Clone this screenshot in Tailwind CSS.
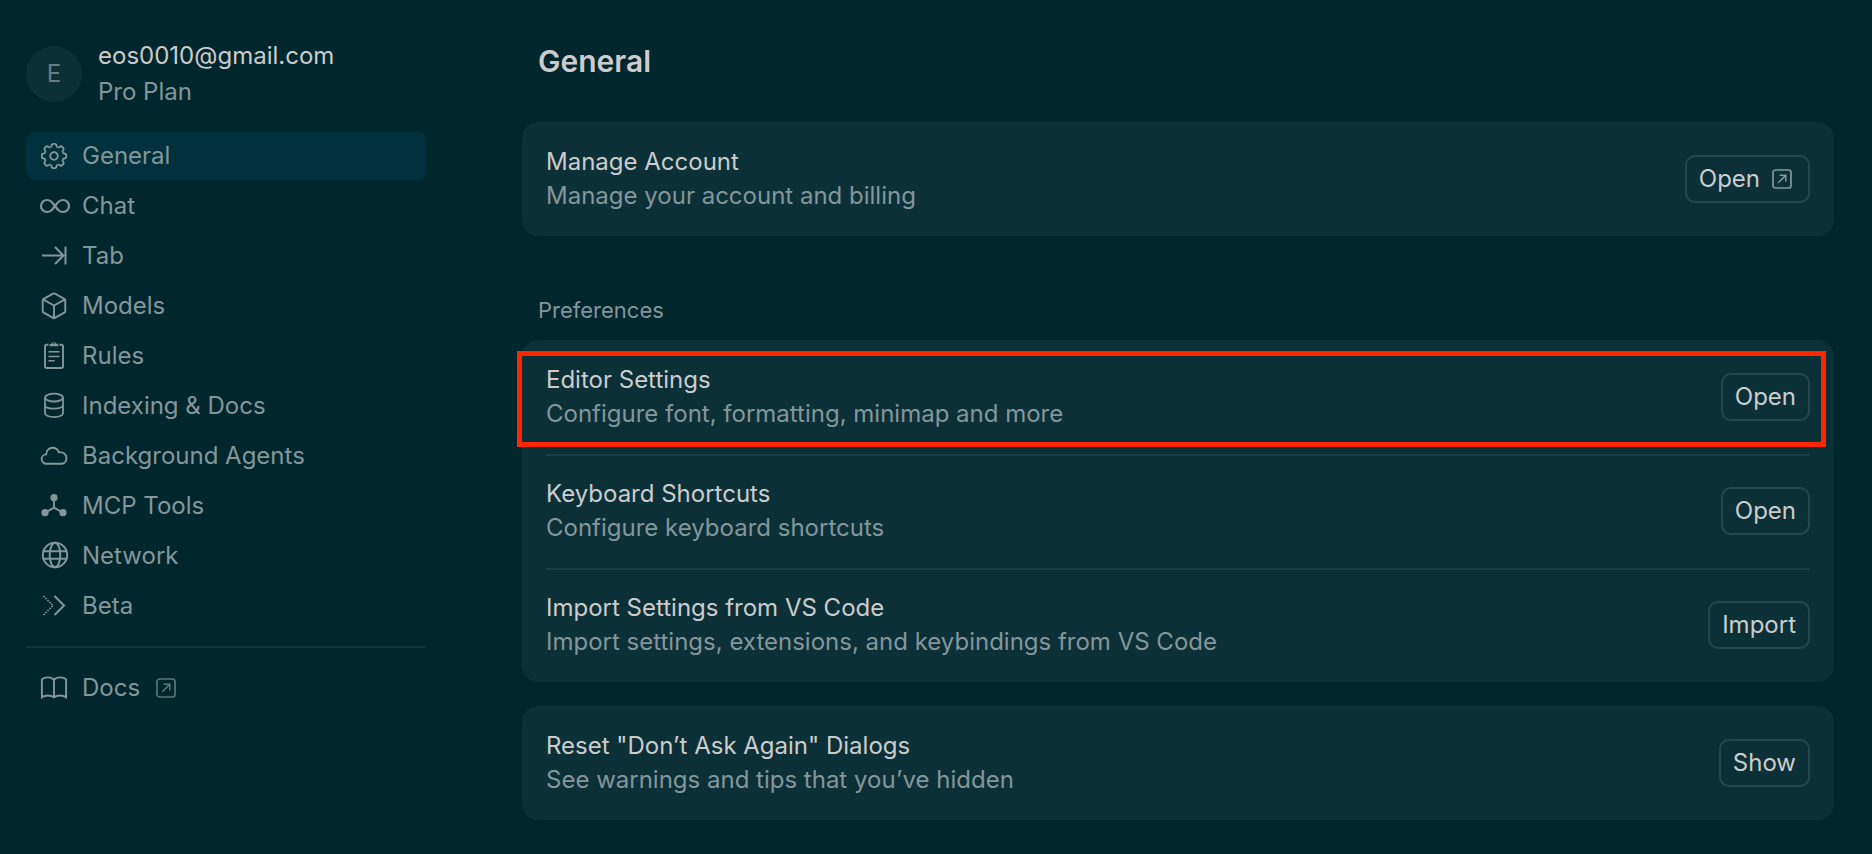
<!DOCTYPE html>
<html lang="en">
<head>
<meta charset="utf-8">
<meta name="viewport" content="width=device-width, initial-scale=1">
<title>Settings</title>
<script src="https://cdn.jsdelivr.net/npm/@tailwindcss/browser@4"></script>
</head>
<body class="min-h-screen bg-[#00262e] font-['Inter','Liberation_Sans',sans-serif] text-[24px] text-[#cccccc]">
<svg class="hidden" aria-hidden="true">
  <symbol id="external" viewBox="0 0 20 20">
    <rect x="1" y="1" width="18" height="18" rx="2.5" fill="none" stroke="currentColor" stroke-width="1.7"/>
    <path d="M6.3 13.700 13.400 6.600M7.600 6.200h6.200v6.200" fill="none" stroke="currentColor" stroke-width="1.500"/>
  </symbol>
</svg>
<div class="flex min-h-screen items-start">
  <aside class="w-[426px] shrink-0 pt-[38px] pl-[26px]">
    <div class="flex items-center gap-4">
      <div class="flex size-14 shrink-0 items-center justify-center rounded-full bg-[#0c3038] text-[#667d82]">E</div>
      <div class="leading-9">
        <p>eos0010@gmail.com</p>
        <p class="text-[#84969a]">Pro Plan</p>
      </div>
    </div>
    <nav class="mt-[22px] text-[#84969a]" aria-label="Settings">
      <ul class="flex flex-col gap-0.5">
        <li><a href="#general" aria-current="page" class="flex h-12 items-center gap-3 rounded-lg bg-[#00313c] pl-3">
          <svg class="size-8" viewBox="-16 -16 32 32" fill="none" stroke="currentColor" stroke-width="1.8">
            <defs><path id="tooth" d="M-3.6-8.7Q-2.700-9.100-2.500-10.200Q-2.300-12.200-.9-12.200H.9Q2.300-12.200 2.500-10.200Q2.700-9.100 3.600-8.700"/></defs>
            <use href="#tooth"/><use href="#tooth" transform="rotate(45)"/><use href="#tooth" transform="rotate(90)"/><use href="#tooth" transform="rotate(135)"/><use href="#tooth" transform="rotate(180)"/><use href="#tooth" transform="rotate(225)"/><use href="#tooth" transform="rotate(270)"/><use href="#tooth" transform="rotate(315)"/>
            <circle r="3.8"/>
          </svg>General</a></li>
        <li><a href="#chat" class="flex h-12 items-center gap-3 rounded-lg pl-3">
          <svg class="size-8" viewBox="-16 -16 32 32" fill="none" stroke="currentColor" stroke-width="2.2"><path d="M1 0C-2-4-3.500-6-7-6a6 6 0 0 0 0 12C-3.500 6-2 4 1 0S5.500-6 9-6a6 6 0 0 1 0 12C5.500 6 4 4 1 0Z"/></svg>Chat</a></li>
        <li><a href="#tab" class="flex h-12 items-center gap-3 rounded-lg pl-3">
          <svg class="size-8" viewBox="-16 -16 32 32" fill="none" stroke="currentColor" stroke-width="2"><path d="M-12-.5H9.500M1-9 9.500-.5 1 8M11.500-9.500V8.500"/></svg>Tab</a></li>
        <li><a href="#models" class="flex h-12 items-center gap-3 rounded-lg pl-3">
          <svg class="size-8" viewBox="-16 -16 32 32" fill="none" stroke="currentColor" stroke-width="1.9" stroke-linejoin="round"><path d="M-1-12.300Q0-12.800 1-12.300L10.300-7.200Q11.300-6.600 11.300-5.500V4.900Q11.300 6 10.300 6.600L1 11.900Q0 12.500-1 11.900L-10.300 6.600Q-11.300 6-11.300 4.900V-5.500Q-11.300-6.600-10.300-7.200ZM-11-6.600 0-.5 11-6.600M0-.5V12"/></svg>Models</a></li>
        <li><a href="#rules" class="flex h-12 items-center gap-3 rounded-lg pl-3">
          <svg class="size-8" viewBox="-16 -16 32 32" fill="none" stroke="currentColor" stroke-width="1.9"><path d="M-5.500-11.200H-7.200Q-9-11.200-9-9.400V10.200Q-9 12-7.200 12H7.200Q9 12 9 10.200V-9.400Q9-11.200 7.200-11.200H5.500"/><path d="M-5.500-4.200H5.500M-5.500.5H5.500M-5.500 4.800H.7" stroke-width="1.6"/><path d="M-4.300-9.800V-12.200H-2.300A2.400 2.400 0 0 1 2.300-12.200H4.300V-9.800ZM-.8-12.600A.8.8 0 1 0 .8-12.600.8.8 0 1 0-.8-12.600Z" fill="currentColor" fill-rule="evenodd" stroke="none"/></svg>Rules</a></li>
        <li><a href="#indexing" class="flex h-12 items-center gap-3 rounded-lg pl-3">
          <svg class="size-8" viewBox="-16 -16 32 32" fill="none" stroke="currentColor" stroke-width="1.8"><ellipse cx="0" cy="-8.4" rx="9" ry="3.9"/><path d="M-9-8.400V7.200C-9 9.500-5 11.100 0 11.100S9 9.500 9 7.200V-8.400M-9-.9C-9 1.300-5 2.700 0 2.700S9 1.300 9-.9"/></svg>Indexing &amp; Docs</a></li>
        <li><a href="#agents" class="flex h-12 items-center gap-3 rounded-lg pl-3">
          <svg class="size-8" viewBox="-16 -16 32 32" fill="none" stroke="currentColor" stroke-width="1.9"><path d="M-7.500 7.800A4.700 4.700 0 0 1-7.800-1.600C-7.900-5.500-5-8.200-1.500-8.200C1.500-8.200 3.800-6.500 4.800-3.800C9-4.300 12.500-1.700 12.500 2C12.500 5.500 10 7.800 7 7.800Z"/></svg>Background Agents</a></li>
        <li><a href="#mcp" class="flex h-12 items-center gap-3 rounded-lg pl-3">
          <svg class="size-8" viewBox="-16 -16 32 32" fill="currentColor" stroke="currentColor" stroke-width="1.9"><path d="M0-8V1.700M-9 6.700 0 1.700 9 6.700" fill="none"/><g stroke="none"><circle cy="-8.3" r="3.6"/><circle cx="-9" cy="6.7" r="3.6"/><circle cx="9" cy="6.7" r="3.6"/></g></svg>MCP Tools</a></li>
        <li><a href="#network" class="flex h-12 items-center gap-3 rounded-lg pl-3">
          <svg class="size-8" viewBox="-16 -16 32 32" fill="none" stroke="currentColor" stroke-width="2"><circle cx="1" cy="-1" r="12.2"/><ellipse cx="1" cy="-1" rx="5.3" ry="12.2"/><path d="M-10.500-4.700H12.500M-10.500 2.800H12.500"/></svg>Network</a></li>
        <li><a href="#beta" class="flex h-12 items-center gap-3 rounded-lg pl-3">
          <svg class="size-8" viewBox="-16 -16 32 32" fill="none" stroke="currentColor" stroke-width="2"><path d="M.5-10 10-.5.5 9"/><path d="M-10.500-10-1-.5-10.500 9" stroke-dasharray="1.6 1.2" stroke-width="1.6"/></svg>Beta</a></li>
      </ul>
      <hr class="my-4 border-t-2 border-[#12343c]">
      <a href="#docs" class="flex h-12 items-center gap-3 rounded-lg pl-3">
        <svg class="size-8" viewBox="-16 -16 32 32" fill="none" stroke="currentColor" stroke-width="1.9"><path d="M0-8.200C-2.500-11.300-9.500-11.300-12.100-8.600V9.300C-9 6.900-3 6.900 0 9.300C3 6.900 9 6.900 12.100 9.300V-8.600C9.500-11.300 2.500-11.300 0-8.200ZM0-8.200V9.300"/></svg>
        Docs
        <svg class="ml-1 size-5 text-[#5c757a]" aria-hidden="true"><use href="#external"/></svg>
      </a>
    </nav>
  </aside>

  <main class="min-w-0 flex-1 pt-10 pr-[38px] pb-[34px] pl-24">
    <h1 class="px-4 text-[30px] leading-[42px] font-semibold">General</h1>

    <section class="mt-10 flex items-center justify-between gap-6 rounded-2xl bg-[#0c3038] px-6 py-[23px] leading-[34px]">
      <div>
        <h2>Manage Account</h2>
        <p class="text-[#84969a]">Manage your account and billing</p>
      </div>
      <button type="button" class="flex h-12 shrink-0 items-center gap-3 rounded-[10px] border-2 border-[#27474e] pr-4 pl-3">Open<svg class="size-5 text-[#84969a]" aria-hidden="true"><use href="#external"/></svg></button>
    </section>

    <h2 class="mt-[58px] px-4 text-[22px] leading-8 text-[#84969a]">Preferences</h2>

    <section class="relative mt-[14px] rounded-2xl bg-[#0c3038] px-6 leading-[34px]">
      <div class="flex items-center justify-between gap-6 py-[23px]">
        <div>
          <h3>Editor Settings</h3>
          <p class="text-[#84969a]">Configure font, formatting, minimap and more</p>
        </div>
        <button type="button" class="h-12 shrink-0 rounded-[10px] border-2 border-[#27474e] px-3">Open</button>
      </div>
      <div class="flex items-center justify-between gap-6 border-t-2 border-[#1b3c44] pt-[21px] pb-[23px]">
        <div>
          <h3>Keyboard Shortcuts</h3>
          <p class="text-[#84969a]">Configure keyboard shortcuts</p>
        </div>
        <button type="button" class="h-12 shrink-0 rounded-[10px] border-2 border-[#27474e] px-3">Open</button>
      </div>
      <div class="flex items-center justify-between gap-6 border-t-2 border-[#1b3c44] pt-[21px] pb-[23px]">
        <div>
          <h3>Import Settings from VS Code</h3>
          <p class="text-[#84969a]">Import settings, extensions, and keybindings from VS Code</p>
        </div>
        <button type="button" class="h-12 shrink-0 rounded-[10px] border-2 border-[#27474e] px-3">Import</button>
      </div>
      <div class="pointer-events-none absolute top-[11px] right-2 -left-[5px] h-24 border-5 border-[#ff2600]"></div>
    </section>

    <section class="mt-6 flex items-center justify-between gap-6 rounded-2xl bg-[#0c3038] px-6 py-[23px] leading-[34px]">
      <div>
        <h3>Reset "Don’t Ask Again" Dialogs</h3>
        <p class="text-[#84969a]">See warnings and tips that you’ve hidden</p>
      </div>
      <button type="button" class="h-12 shrink-0 rounded-[10px] border-2 border-[#27474e] px-3">Show</button>
    </section>
  </main>
</div>
</body>
</html>
